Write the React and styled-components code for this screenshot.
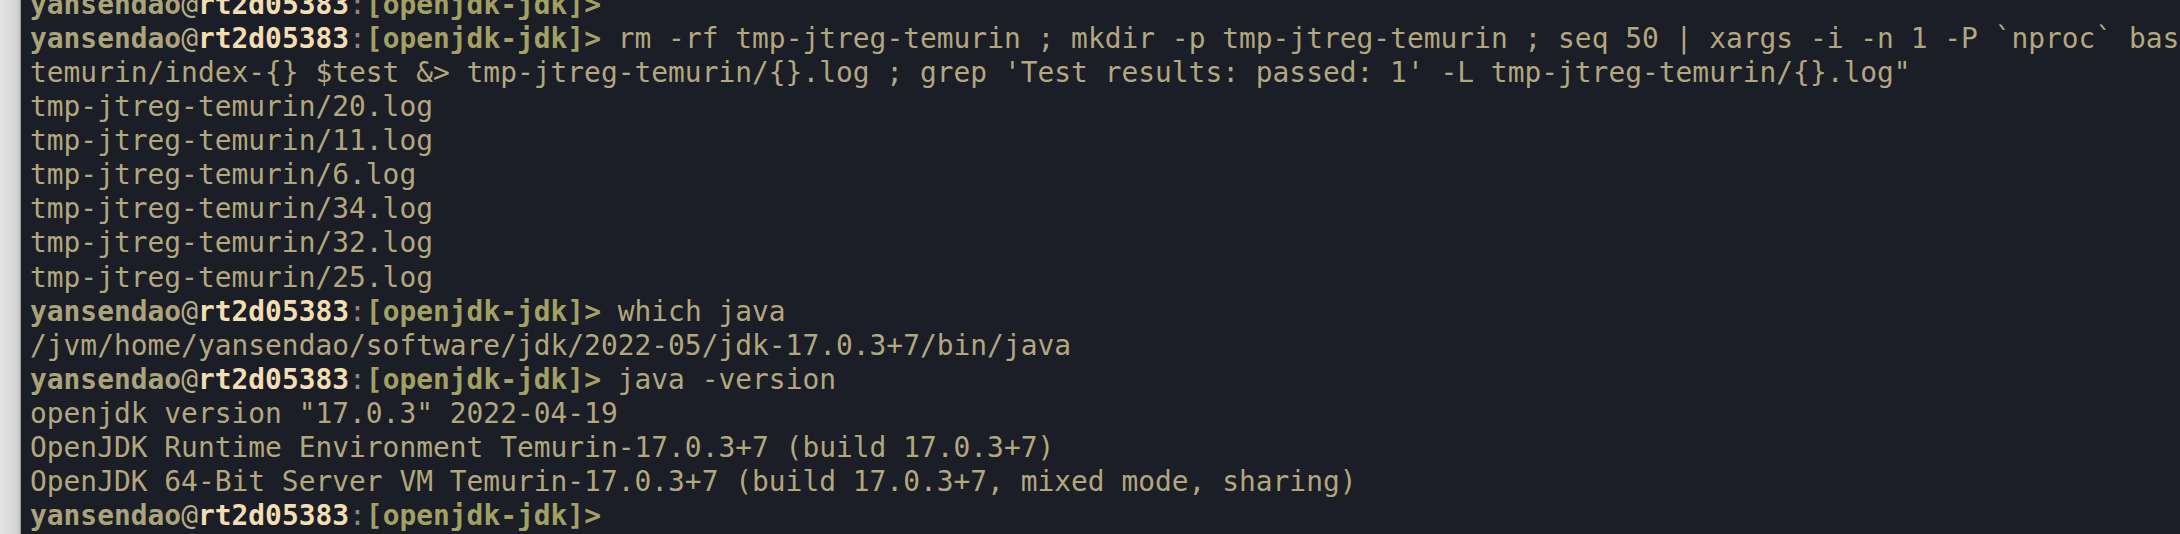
import { createGlobalStyle, styled } from 'styled-components';

const GlobalStyle = createGlobalStyle`
  html, body {
    margin: 0;
    padding: 0;
    background: #1b1d27;
  }
`;

const Window = styled.div`
  display: flex;
  width: 2180px;
  height: 534px;
  overflow: hidden;
`;

const Edge = styled.div`
  flex: 0 0 20px;
  background: linear-gradient(90deg, #e4e4e4 0%, #d6d6d6 80%, #c4c4c4 100%);
  border-right: 1px solid #9a9a9a;
`;

const Screen = styled.div`
  flex: 1;
  display: flex;
  flex-direction: column;
  justify-content: flex-end;
  min-width: 0;
  padding: 0 0 1px 9px;
  background: #1b1d27;
  overflow: hidden;
  font-family: "DejaVu Sans Mono", "Liberation Mono", monospace;
  font-size: 27.9px;
  line-height: 34.07px;
  color: #b3a77e;
`;

const Line = styled.div`
  white-space: pre;
  flex: 0 0 auto;
`;

const Seg = styled.span`
  color: ${(p) => p.$color};
  font-weight: ${(p) => (p.$bold ? 700 : 400)};
`;

const Prompt = () => (
  <>
    <Seg $color="#aba37a" $bold>yansendao</Seg>
    <Seg $color="#b8ae86">@</Seg>
    <Seg $color="#f3ddb3" $bold>rt2d05383</Seg>
    <Seg $color="#8c8a7c">:</Seg>
    <Seg $color="#a3a063" $bold>[openjdk-jdk]&gt;</Seg>
  </>
);

const lines = [
  { prompt: true, text: '' },
  {
    prompt: true,
    text: ' rm -rf tmp-jtreg-temurin ; mkdir -p tmp-jtreg-temurin ; seq 50 | xargs -i -n 1 -P `nproc` bash -c "jtreg -w:tmp-jtreg-',
  },
  { text: 'temurin/index-{} $test &> tmp-jtreg-temurin/{}.log ; grep \'Test results: passed: 1\' -L tmp-jtreg-temurin/{}.log"' },
  { text: 'tmp-jtreg-temurin/20.log' },
  { text: 'tmp-jtreg-temurin/11.log' },
  { text: 'tmp-jtreg-temurin/6.log' },
  { text: 'tmp-jtreg-temurin/34.log' },
  { text: 'tmp-jtreg-temurin/32.log' },
  { text: 'tmp-jtreg-temurin/25.log' },
  { prompt: true, text: ' which java' },
  { text: '/jvm/home/yansendao/software/jdk/2022-05/jdk-17.0.3+7/bin/java' },
  { prompt: true, text: ' java -version' },
  { text: 'openjdk version "17.0.3" 2022-04-19' },
  { text: 'OpenJDK Runtime Environment Temurin-17.0.3+7 (build 17.0.3+7)' },
  { text: 'OpenJDK 64-Bit Server VM Temurin-17.0.3+7 (build 17.0.3+7, mixed mode, sharing)' },
  { prompt: true, text: '' },
];

const App = () => {
  return (
    <Window>
      <GlobalStyle />
      <Edge />
      <Screen>
        {lines.map((l, i) => (
          <Line key={i}>
            {l.prompt && <Prompt />}
            {l.text}
          </Line>
        ))}
      </Screen>
    </Window>
  );
};

export default App;
